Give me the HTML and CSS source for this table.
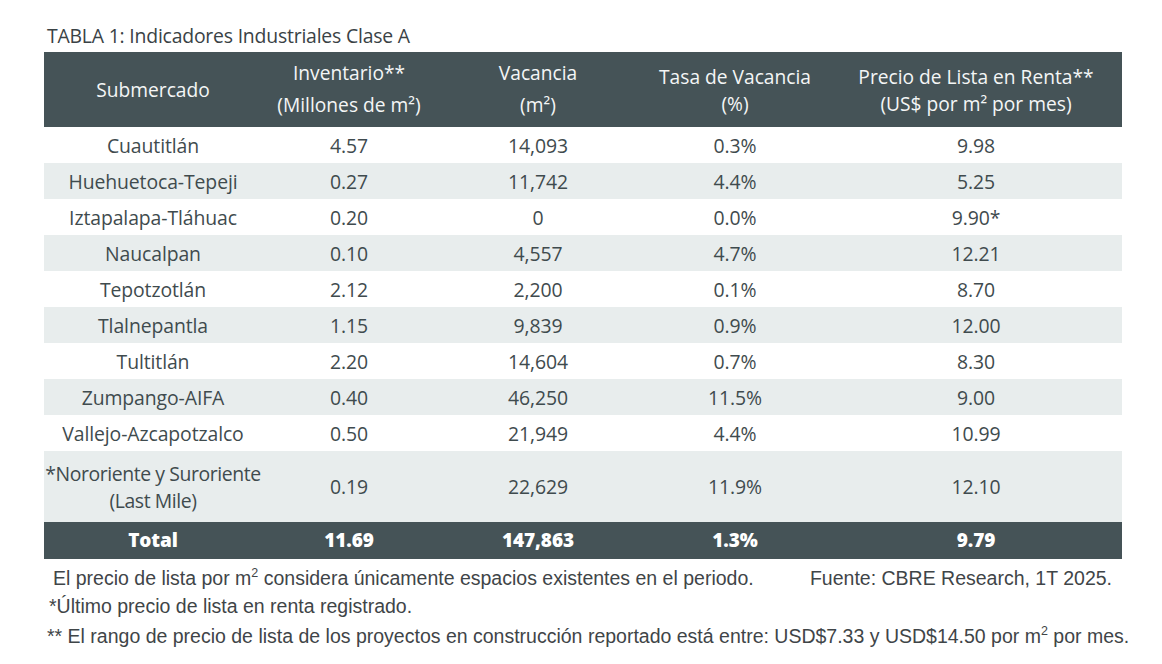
FILE: index.html
```html
<!DOCTYPE html>
<html lang="es">
<head>
<meta charset="utf-8">
<title>TABLA 1</title>
<link rel="stylesheet" href="styles.css">
</head>
<body>
<div class="page">
  <div class="caption">TABLA 1: Indicadores Industriales Clase A</div>
  <table class="tbl">
    <colgroup>
      <col class="c1"><col class="c2"><col class="c3"><col class="c4"><col class="c5">
    </colgroup>
    <thead>
      <tr>
        <th>Submercado</th>
        <th class="tall">Inventario**<br>(Millones de m²)</th>
        <th class="tall">Vacancia<br>(m²)</th>
        <th class="short">Tasa de Vacancia<br>(%)</th>
        <th class="short">Precio de Lista en Renta**<br>(US$ por m² por mes)</th>
      </tr>
    </thead>
    <tbody>
      <tr><td>Cuautitlán</td><td>4.57</td><td>14,093</td><td>0.3%</td><td>9.98</td></tr>
      <tr class="alt"><td>Huehuetoca-Tepeji</td><td>0.27</td><td>11,742</td><td>4.4%</td><td>5.25</td></tr>
      <tr><td>Iztapalapa-Tláhuac</td><td>0.20</td><td>0</td><td>0.0%</td><td>9.90*</td></tr>
      <tr class="alt"><td>Naucalpan</td><td>0.10</td><td>4,557</td><td>4.7%</td><td>12.21</td></tr>
      <tr><td>Tepotzotlán</td><td>2.12</td><td>2,200</td><td>0.1%</td><td>8.70</td></tr>
      <tr class="alt"><td>Tlalnepantla</td><td>1.15</td><td>9,839</td><td>0.9%</td><td>12.00</td></tr>
      <tr><td>Tultitlán</td><td>2.20</td><td>14,604</td><td>0.7%</td><td>8.30</td></tr>
      <tr class="alt"><td>Zumpango-AIFA</td><td>0.40</td><td>46,250</td><td>11.5%</td><td>9.00</td></tr>
      <tr><td>Vallejo-Azcapotzalco</td><td>0.50</td><td>21,949</td><td>4.4%</td><td>10.99</td></tr>
      <tr class="alt double"><td class="nowrap">*Nororiente y Suroriente<br>(Last Mile)</td><td>0.19</td><td>22,629</td><td>11.9%</td><td>12.10</td></tr>
    </tbody>
    <tfoot>
      <tr><td>Total</td><td>11.69</td><td>147,863</td><td>1.3%</td><td>9.79</td></tr>
    </tfoot>
  </table>
  <div class="notes">
    <div class="note-row">
      <span class="n1">El precio de lista por m<sup>2</sup> considera únicamente espacios existentes en el periodo.</span>
      <span class="src">Fuente: CBRE Research, 1T 2025.</span>
    </div>
    <div class="n2">*Último precio de lista en renta registrado.</div>
    <div class="n3">** El rango de precio de lista de los proyectos en construcción reportado está entre: USD$7.33 y USD$14.50 por m<sup>2</sup> por mes.</div>
  </div>
</div>
</body>
</html>
```

FILE: styles.css
```css
html, body {
  margin: 0;
  padding: 0;
  background: #ffffff;
}

.page {
  padding: 26px 0 0 44px;
  width: 1100px;
}

.caption {
  font-family: "Open Sans", "Liberation Sans", sans-serif;
  font-size: 19.4px;
  color: #3a4245;
  line-height: 20px;
  margin-left: 3px;
  margin-bottom: 6px;
  letter-spacing: -0.2px;
}

.tbl {
  border-collapse: collapse;
  width: 1078px;
  table-layout: fixed;
  font-family: "Open Sans", "Liberation Sans", sans-serif;
  color: #3f4b4e;
}

.c1 { width: 218px; }
.c2 { width: 174px; }
.c3 { width: 204px; }
.c4 { width: 190px; }
.c5 { width: 292px; }

.tbl th {
  background: #455357;
  color: #f4f6f6;
  font-weight: 500;
  font-size: 19.2px;
  height: 73px;
  padding: 0;
  text-align: center;
  letter-spacing: 0;
}

.tbl th.tall { line-height: 32px; padding-bottom: 2px; }
.tbl th.short { line-height: 27px; }

.tbl td {
  text-align: center;
  font-size: 19.4px;
  height: 36px;
  padding: 0;
  line-height: 27px;
  letter-spacing: -0.1px;
}

.tbl td.nowrap {
  white-space: nowrap;
  letter-spacing: -0.4px;
}

.tbl tbody tr.alt td { background: #e8eded; }
.tbl tbody tr.double td { height: 71px; }

.tbl tfoot td {
  background: #455357;
  color: #ffffff;
  font-weight: 800;
  height: 37px;
  font-size: 19px;
}

.notes {
  font-family: "Liberation Sans", Arial, sans-serif;
  font-size: 19.5px;
  color: #3f4548;
  width: 1100px;
}

.notes sup {
  font-size: 12.5px;
  vertical-align: 8px;
  line-height: 0;
}

.note-row {
  display: flex;
  justify-content: space-between;
  margin-top: 8px;
  line-height: 22px;
  padding-left: 9px;
  padding-right: 32px;
}

.n2 {
  margin-top: 6px;
  line-height: 22px;
  padding-left: 5px;
}

.n3 {
  margin-top: 8px;
  line-height: 22px;
  padding-left: 3px;
  white-space: nowrap;
}
```
